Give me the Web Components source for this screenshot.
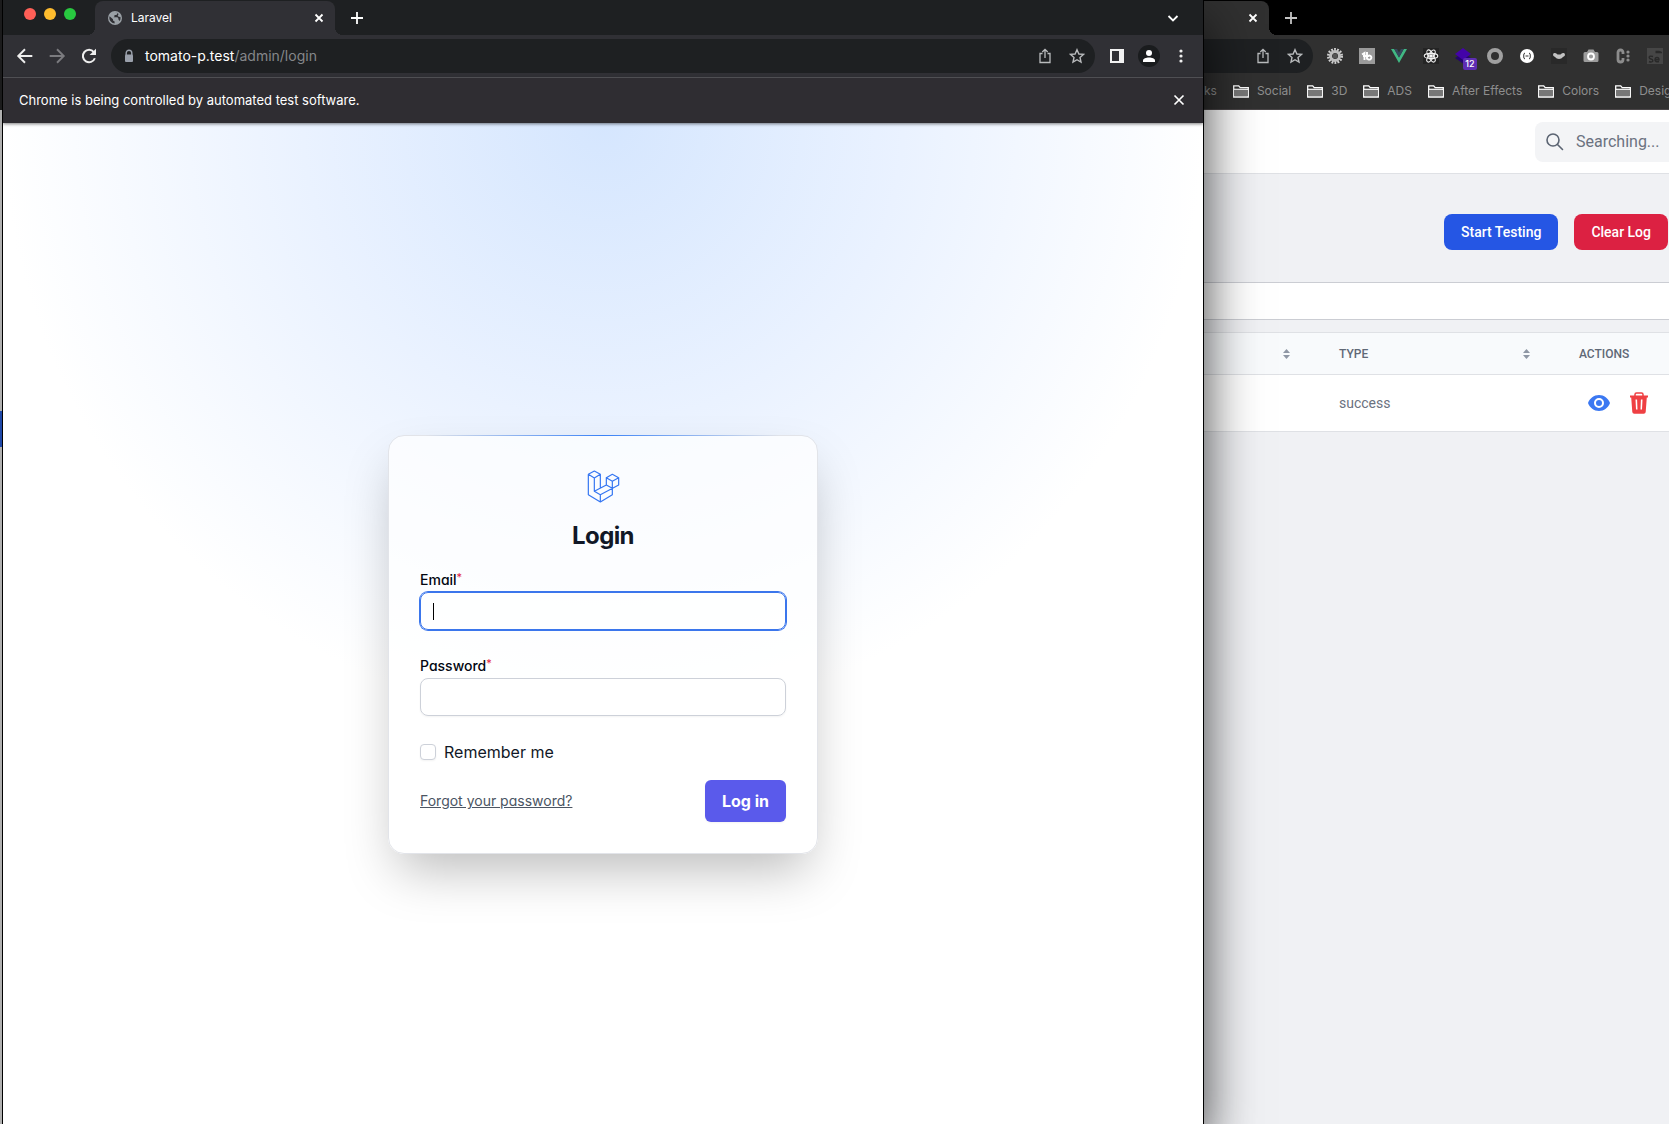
<!DOCTYPE html>
<html lang="en">
<head>
<meta charset="utf-8">
<title>Laravel</title>
<style>
  html, body { margin: 0; height: 100%; }
  body { overflow: hidden; font-family: Inter, "Liberation Sans", sans-serif; }
</style>
</head>
<body>
<desktop-view></desktop-view>

<template id="t-desktop">
  <style>
    :host { display: flex; height: 100vh; overflow: hidden; background: #000; }
    .edge { flex: 0 0 2px; z-index: 2; display: flex; flex-direction: column; background: #b0b0b0; }
    .edge i { display: block; }
    .edge .dark { height: 110px; background: #1b1b1c; }
    .edge .gap { height: 301px; }
    .edge .item { height: 36px; background: #1f48a8; }
    front-window { flex: 1 1 0; min-width: 0; z-index: 1; }
    back-window { flex: 0 0 465px; min-width: 0; }
  </style>
  <div class="edge"><i class="dark"></i><i class="gap"></i><i class="item"></i></div>
  <front-window></front-window>
  <back-window></back-window>
</template>

<template id="t-front">
  <style>
    :host { display: flex; flex-direction: column; box-sizing: border-box; border: 0 solid #000; border-width: 0 1px; box-shadow: 0 24px 50px rgba(0,0,0,.75); background: #fff; position: relative; }
    button { all: unset; display: flex; align-items: center; justify-content: center; }
    svg { display: block; }
    .strip { height: 35px; background: #1e2022; display: flex; box-sizing: border-box; }
    .lights { display: flex; gap: 8px; padding: 8px 19px 0 21px; }
    .lights i { width: 12px; height: 12px; border-radius: 50%; background: var(--c); }
    .tab { position: relative; margin-top: 1px; width: 240px; box-sizing: border-box; padding: 0 8px 0 13px; display: flex; align-items: center; gap: 9px; border-radius: 8px 8px 0 0; background: #303035; color: #fff; font-size: 12px; line-height: 16px; }
    .tab::before, .tab::after { content: ""; position: absolute; bottom: 0; width: 8px; height: 8px; }
    .tab::before { left: -8px; background: radial-gradient(circle at 0 0, transparent 8px, #303035 8px); }
    .tab::after { right: -8px; background: radial-gradient(circle at 100% 0, transparent 8px, #303035 8px); }
    .tab span { flex: 1; }
    .plus { width: 44px; color: #fff; }
    .chev { margin-left: auto; width: 60px; color: #fff; }
    .bar { height: 42px; background: #303035; border-bottom: 1px solid #57575b; display: flex; align-items: center; color: #eee; }
    .nav { display: flex; padding-left: 6px; padding-right: 6px; }
    .nav button, .tools button { width: 32px; height: 32px; }
    .dim { color: #7b7b7f; }
    .omni { flex: 1; height: 34px; border-radius: 17px; background: #1e2022; display: flex; align-items: center; padding: 0 2px 0 12px; gap: 10px; color: #b9bbbd; }
    .url { flex: 1; font-size: 14px; line-height: 20px; color: #85878a; }
    .url b { font-weight: 400; color: #fff; }
    .omni button { width: 32px; height: 32px; }
    .omni .share { margin-right: -10px; }
    .tools { display: flex; padding: 0 6px; }
    .avatar { width: 22px; height: 22px; border-radius: 50%; background: #1a1c1e; display: flex; align-items: center; justify-content: center; }
    .info { height: 45px; box-sizing: border-box; padding: 0 15px 2px 16px; background: #2f2d32; color: #fff; display: flex; align-items: center; justify-content: space-between; font-size: 13px; line-height: 20px; box-shadow: 0 1px 3px rgba(0,0,0,.5); z-index: 1; }
    login-page { flex: 1; min-height: 0; }
  </style>
  <div class="strip">
    <div class="lights"><i style="--c:#ff5f57"></i><i style="--c:#febc2e"></i><i style="--c:#28c840"></i></div>
    <div class="tab">
      <svg width="14" height="14" viewBox="0 0 14 14"><circle cx="7" cy="7" r="7" fill="#9aa0a6"/><path d="M1.600 5.200 5 8.200v1.200l1.600 1v2a5.500 5.500 0 0 1-5-7.200ZM7 1.500c1 0 1.800.2 2.500.6L8.500 4H6.500v1.500L5.500 6.200h4l1 1.500v1l1.200 1.300A5.500 5.500 0 0 0 12.400 6l-1.900-.3-.8-1.500 1-1.200A5.500 5.500 0 0 0 7 1.500Z" fill="#303035"/></svg>
      <span>Laravel</span>
      <button aria-label="Close tab"><ui-icon name="close" size="16"></ui-icon></button>
    </div>
    <button class="plus" aria-label="New tab"><ui-icon name="plus" size="16"></ui-icon></button>
    <button class="chev" aria-label="Search tabs"><ui-icon name="chevron" size="16"></ui-icon></button>
  </div>
  <div class="bar">
    <div class="nav">
      <button aria-label="Back"><ui-icon name="back" size="18"></ui-icon></button>
      <button class="dim" aria-label="Forward"><ui-icon name="forward" size="18"></ui-icon></button>
      <button aria-label="Reload"><ui-icon name="reload" size="18"></ui-icon></button>
    </div>
    <div class="omni">
      <svg width="12" height="14" viewBox="0 0 12 14"><path d="M3.200 6V4a2.800 2.800 0 0 1 5.600 0v2" fill="none" stroke="#9aa0ab" stroke-width="1.400"/><rect x="2" y="5.500" width="8" height="7.500" rx="1" fill="#9aa0ab"/></svg>
      <div class="url"><b>tomato-p.test</b>/admin/login</div>
      <button class="share" aria-label="Share"><ui-icon name="share" size="16"></ui-icon></button>
      <button aria-label="Bookmark"><ui-icon name="star" size="16"></ui-icon></button>
    </div>
    <div class="tools">
      <button aria-label="Side panel"><svg width="14" height="14" viewBox="0 0 14 14"><path fill="#f2f2f2" fill-rule="evenodd" d="M0 0h14v14H0ZM2 2v10h7V2Z"/></svg></button>
      <button aria-label="Profile"><span class="avatar"><svg width="14" height="14" viewBox="0 0 14 14" fill="#fff"><circle cx="7" cy="4" r="3"/><path d="M1 13v-1.500C1 9.500 4 8.500 7 8.500s6 1 6 3V13Z"/></svg></span></button>
      <button aria-label="Menu"><svg width="4" height="14" viewBox="0 0 4 14" fill="#eee"><circle cx="2" cy="2" r="1.600"/><circle cx="2" cy="7" r="1.600"/><circle cx="2" cy="12" r="1.600"/></svg></button>
    </div>
  </div>
  <div class="info"><span>Chrome is being controlled by automated test software.</span><button aria-label="Dismiss"><ui-icon name="closebig" size="18"></ui-icon></button></div>
  <login-page></login-page>
</template>

<template id="t-login">
  <style>
    :host { display: flex; align-items: center; justify-content: center; padding-top: 42px; background: radial-gradient(circle 600px at top, #d5e6fe 0, #eaf2ff 50%, #fff 100%) #fff; font-feature-settings: "cv11"; color: #111827; }
    form { position: relative; box-sizing: border-box; width: 100%; max-width: 430px; padding: 31px; border: 1px solid #e2e4e9; border-radius: 16px; background: rgba(255,255,255,.7); background-clip: padding-box; box-shadow: 0 25px 52px -10px rgba(0,0,0,.27); display: flex; flex-direction: column; }
    .line { position: absolute; top: -1px; left: 16px; right: 16px; height: 1px; background: linear-gradient(90deg, transparent 5%, #3b82f6, transparent 95%); }
    svg { display: block; margin: 3px auto 0; }
    h1 { margin: 15px 0 0; text-align: center; font-size: 24px; line-height: 36px; font-weight: 700; letter-spacing: -0.025em; }
    login-field { margin-top: 26px; }
    h1 + login-field { margin-top: 16px; }
    .remember { display: flex; align-items: center; gap: 8px; margin-top: 24px; font-size: 16px; line-height: 24px; }
    .remember input { appearance: none; box-sizing: border-box; margin: 0; width: 16px; height: 16px; border: 1px solid #cdd1d9; border-radius: 4px; background: #fff; box-shadow: 0 1px 2px rgba(0,0,0,.05); }
    .foot { display: flex; align-items: center; justify-content: space-between; margin-top: 16px; }
    a { color: #4b5563; font-size: 14px; line-height: 20px; text-decoration: underline; }
    button { border: 0; margin: 0; padding: 0 17px; height: 42px; border-radius: 6px; background: #5a5aeb; color: #fff; font: 700 16px/24px Inter, sans-serif; box-shadow: 0 1px 2px rgba(0,0,0,.05); }
  </style>
  <form onsubmit="return false">
    <div class="line"></div>
    <svg width="33" height="33" viewBox="624 148 99 99" fill="none" stroke="#3576f2" stroke-width="3.600" stroke-linejoin="round"><path d="M646 151 664 161 646 172 628 161ZM628 161V222L664 244 700 222V182L682 171V193L646 212V172M664 161V203M682 171 700 161 719 171 700 182M719 171V193L664 222V244M646 212 664 222M682 193 700 203"/></svg>
    <h1>Login</h1>
    <login-field field="email" type="email" text="Email" active></login-field>
    <login-field field="password" type="password" text="Password"></login-field>
    <label class="remember"><input type="checkbox"><span>Remember me</span></label>
    <div class="foot"><a href="#forgot">Forgot your password?</a><button type="submit">Log in</button></div>
  </form>
</template>

<template id="t-field">
  <style>
    :host { display: block; }
    label { display: flex; align-items: flex-start; font-size: 14px; line-height: 20px; font-weight: 500; color: #030712; height: 22px; }
    sup { font-size: 11px; line-height: 14px; font-weight: 400; color: #e11d48; }
    input { display: block; box-sizing: border-box; width: 100%; height: 38px; margin: 0; padding: 0 12px; border: 1px solid #cdd1d9; border-radius: 8px; background: rgba(255,255,255,.6); outline: 0; font: 16px Inter, sans-serif; box-shadow: 0 1px 2px rgba(0,0,0,.05); }
    :host([active]) input { border-color: #3b76ec; box-shadow: 0 0 0 1px #3b76ec; background: linear-gradient(#000,#000) 12px 50% / 1px 17px no-repeat, rgba(255,255,255,.6); caret-color: transparent; }
  </style>
  <label for="f"><span></span><sup>*</sup></label>
  <input id="f">
</template>

<template id="t-back">
  <style>
    :host { display: flex; flex-direction: column; overflow: hidden; background: #f0f1f4; font-family: Roboto, "Noto Sans", sans-serif; }
    button { all: unset; display: flex; align-items: center; justify-content: center; }
    .strip { height: 35px; background: #000; display: flex; flex: none; }
    .tab { position: relative; width: 65px; margin-top: 1px; box-sizing: border-box; padding-right: 8px; border-radius: 0 8px 0 0; background: #303030; color: #fff; display: flex; align-items: center; justify-content: flex-end; }
    .tab::after { content: ""; position: absolute; bottom: 0; right: -8px; width: 8px; height: 8px; background: radial-gradient(circle at 100% 0, transparent 8px, #303030 8px); }
    .plus { width: 44px; color: #c4c4c4; }
    .bar { flex: none; height: 42px; background: #303030; display: flex; align-items: center; color: #b9bbbd; }
    .omni { flex: none; width: 109px; height: 34px; border-radius: 0 17px 17px 0; background: #1e2022; display: flex; justify-content: flex-end; align-items: center; box-sizing: border-box; padding-right: 2px; margin-right: 6px; }
    .omni button, .ext { flex: none; width: 32px; height: 32px; display: flex; align-items: center; justify-content: center; }
    .ext { position: relative; }
    .badge { position: absolute; left: 16px; top: 18px; width: 14px; height: 12px; border-radius: 2px; background: #5e2db3; color: #fff; font: 500 9px/12px Inter, sans-serif; text-align: center; }
    .marks { flex: none; height: 33px; box-sizing: border-box; padding-bottom: 5px; border-bottom: 1px solid #4a4648; background: #303030; color: #8e8e8e; display: flex; align-items: center; gap: 16px; font: 12px/16px Inter, sans-serif; white-space: nowrap; overflow: hidden; }
    .marks span { display: flex; align-items: center; gap: 8px; }
    header { flex: none; height: 64px; box-sizing: border-box; background: #fff; border-bottom: 1px solid #dfe1e5; display: flex; align-items: center; padding-left: 331px; }
    .search { flex: 1; min-width: 0; height: 40px; border-radius: 8px 0 0 8px; background: #f3f4f6; display: flex; align-items: center; padding-left: 10px; gap: 11px; color: #5b6472; }
    .search input { flex: 1; min-width: 0; border: 0; padding: 0; background: none; outline: 0; font: 16px/24px Roboto, sans-serif; }
    .search input::placeholder { color: #6b7280; opacity: 1; }
    .actions { flex: none; height: 108px; display: flex; align-items: center; justify-content: flex-end; gap: 16px; padding: 8px 1px 0 0; box-sizing: border-box; }
    .actions button { height: 36px; padding: 0 17px; border-radius: 8px; background: #2556e4; color: #fff; font: 500 14px/20px Roboto, sans-serif; }
    .actions .red { background: #dc2142; }
    .panel { flex: none; height: 38px; box-sizing: border-box; border: 1px solid #cbcdd3; border-width: 1px 0; background: #fff; }
    table { margin-top: 12px; width: 100%; border-collapse: collapse; table-layout: fixed; }
    th, td { padding: 0 24px; border: 1px solid #dfe1e5; border-width: 1px 0; text-align: left; }
    th { height: 41px; background: #f8fafc; color: #5f6876; font-weight: 500; font-size: 12px; line-height: 16px; }
    th div { display: flex; justify-content: space-between; align-items: center; }
    th:nth-child(1) { width: 63px; } th:nth-child(2) { width: 192px; }
    td { height: 56px; background: #fff; color: #6b7280; font-size: 14px; line-height: 20px; }
    td:last-child { padding-left: 32px; padding-right: 0; }
    td div { display: flex; gap: 16px; align-items: center; }
    svg { display: block; }
  </style>
  <div class="strip"><div class="tab"><button aria-label="Close tab"><ui-icon name="close" size="16"></ui-icon></button></div><button class="plus" aria-label="New tab"><ui-icon name="plus" size="16"></ui-icon></button></div>
  <div class="bar">
    <div class="omni"><button aria-label="Share"><ui-icon name="share" size="16"></ui-icon></button><button aria-label="Bookmark"><ui-icon name="star" size="16"></ui-icon></button></div>
    <div class="ext"><svg width="16" height="16" viewBox="0 0 16 16"><circle cx="8" cy="8" r="6.500" fill="none" stroke="#d0d0d0" stroke-width="3" stroke-dasharray="1.700 1.200"/><circle cx="8" cy="8" r="4.500" fill="none" stroke="#bdbdbd" stroke-width="3"/><circle cx="8" cy="8" r="2.500" fill="#555"/></svg></div>
    <div class="ext"><svg width="16" height="16" viewBox="0 0 16 16"><path fill="#9a9a9a" d="M0 0h16v16H0Z"/><path d="M3 6.500 5.500 5v7M4 8h6M8 4v7.500M8 9.500a2.200 2 0 1 1 0 .2" fill="none" stroke="#fff" stroke-width="1.900"/></svg></div>
    <div class="ext"><svg width="16" height="16" viewBox="0 0 16 16"><path fill="#41b883" d="M0 1h3.200L8 9.500 12.800 1H16L8 15Z"/><path fill="#35495e" d="M3.200 1H6l2 3.500L10 1h2.800L8 9.500Z"/></svg></div>
    <div class="ext"><svg width="16" height="16" viewBox="0 0 16 16" fill="none" stroke="#f4f4f4" stroke-width="1.100"><path d="M0 0h16v16H0Z" fill="#242424" stroke="none"/><ellipse cx="8" cy="8" rx="6.800" ry="2.600"/><ellipse cx="8" cy="8" rx="6.800" ry="2.600" transform="rotate(60 8 8)"/><ellipse cx="8" cy="8" rx="6.800" ry="2.600" transform="rotate(120 8 8)"/><circle cx="8" cy="8" r="1.300" fill="#fff"/></svg></div>
    <div class="ext"><svg width="16" height="16" viewBox="0 0 16 16"><path d="m0 10 8-5 8 5-8 5.500Z" fill="#24046e"/><path d="m0 6 8-6 8 6-8 6Z" fill="#4303a8"/></svg><span class="badge">12</span></div>
    <div class="ext"><svg width="16" height="16" viewBox="0 0 16 16"><circle cx="8" cy="8" r="6" fill="none" stroke="#a0a0a0" stroke-width="4"/></svg></div>
    <div class="ext"><svg width="14" height="14" viewBox="0 0 14 14"><circle cx="7" cy="7" r="7" fill="#fff"/><path d="M5 4Q3.500 4 3.700 7 3.500 10 5 10M9 4Q10.500 4 10.300 7 10.500 10 9 10M5.500 7h3" fill="none" stroke="#333" stroke-width="1"/></svg></div>
    <div class="ext"><svg width="16" height="16" viewBox="0 0 16 16"><path fill="#292929" d="M0 0h16v16H0Z"/><path d="M2 7q0-2.500 2-2 1.500.2 2.500 1.500h3Q10.500 5 12 5q2-.5 2 2 0 1-2 2-1.500 2-4 2T4 9Q2 8 2 7" fill="#c2c2c2"/></svg></div>
    <div class="ext"><svg width="16" height="16" viewBox="0 0 16 16"><path d="M2 4h2l1.500-2.500h5L12 4h2a1.500 1.500 0 0 1 1.500 1.500v7A1.500 1.500 0 0 1 14 14H2a1.500 1.500 0 0 1-1.500-1.500v-7A1.500 1.500 0 0 1 2 4Z" fill="#9c9c9c"/><circle cx="8" cy="8.500" r="3" fill="#9c9c9c" stroke="#fff" stroke-width="1.800"/></svg></div>
    <div class="ext"><svg width="16" height="16" viewBox="0 0 16 16"><path d="M8 6V4.500Q8 2 5.500 2T3 4.500v7Q3 14 5.500 14T8 11.500V10" fill="none" stroke="#8c8c8c" stroke-width="2.800"/><g fill="#8c8c8c"><circle cx="13" cy="4" r="1.600"/><circle cx="13" cy="8" r="1.600"/><circle cx="13" cy="12" r="1.600"/></g></svg></div>
    <div class="ext"><svg width="16" height="16" viewBox="0 0 16 16" fill="none" stroke="#292929" stroke-width="1.400"><path d="M0 0h16v16H0Z" fill="#464646" stroke="none"/><path d="M6 8.500Q2 7.500 2.200 9.500 2.500 11 4.500 11.200 6.500 12 5.500 13.500 4 14.500 2 13.500M8 11.800h4Q12 9.500 10 9.500T8 12q.5 2.500 4 1.500M8.500 3.500h4M13 3v2M8.500 4.500H15"/></svg></div>
  </div>
  <div class="marks"></div>
  <header><label class="search"><svg width="20" height="20" viewBox="0 0 20 20" fill="none" stroke="currentColor" stroke-width="1.600" stroke-linecap="round"><circle cx="8" cy="8" r="6"/><path d="m12.500 12.500 5 5"/></svg><input type="text" placeholder="Searching..." aria-label="Search"></label></header>
  <div class="actions"><button>Start Testing</button><button class="red">Clear Log</button></div>
  <div class="panel"></div>
  <table>
    <thead><tr><th><div><span></span><sort-mark></sort-mark></div></th><th><div>TYPE<sort-mark></sort-mark></div></th><th>ACTIONS</th></tr></thead>
    <tbody><tr><td></td><td>success</td><td><div>
      <button aria-label="View"><svg width="24" height="24" viewBox="0 0 24 24"><path fill="#3b78f2" fill-rule="evenodd" d="M12 4C7 4 2.700 7.400 1 12c1.700 4.600 6 8 11 8s9.300-3.400 11-8c-1.700-4.600-6-8-11-8Zm0 13a5 5 0 1 1 0-10 5 5 0 0 1 0 10Zm0-2a3 3 0 1 0 0-6 3 3 0 0 0 0 6Z"/></svg></button>
      <button aria-label="Delete"><svg width="24" height="24" viewBox="0 0 24 24"><path d="M8 5V3.500Q8 2 9.500 2h5Q16 2 16 3.500V5" fill="none" stroke="#ef4043" stroke-width="1.500"/><path fill="#ef4043" fill-rule="evenodd" d="M3 4.500h18v2h-1.200L18.700 21a2 2 0 0 1-2 1.800H7.300a2 2 0 0 1-2-1.800L4.200 6.500H3ZM8.500 8.500l.5 10h1.500l-.4-10Zm5.400 0-.4 10H15l.5-10Z"/></svg></button>
    </div></td></tr></tbody>
  </table>
</template>

<script>
  const icons = {
    close: '<path d="m4.500 4.500 7 7m0-7-7 7" stroke-width="1.800"/>',
    closebig: '<path d="m4 4 8 8m0-8-8 8" stroke-width="1.500"/>',
    plus: '<path d="M8 2v12M2 8h12" stroke-width="1.800"/>',
    chevron: '<path d="m3.500 6 4.500 4.500L12.500 6" stroke-width="1.800"/>',
    back: '<path d="M14.500 8H2.500M8 2 2 8l6 6" stroke-width="1.700"/>',
    forward: '<path d="M1.500 8h12M8 2l6 6-6 6" stroke-width="1.700"/>',
    reload: '<path d="M13.200 10A5.500 5.500 0 1 1 12.300 4.500L13 5.400" stroke-width="1.800"/><path d="M14.200 1.500v5.700H8.500Z" fill="currentColor" stroke="none"/>',
    share: '<path d="M5.500 5.500H3V14.500h10V5.500h-2.500M8 10V1.500M5.300 4 8 1.300 10.700 4" stroke-width="1.300"/>',
    star: '<path d="m8 1.700 1.900 4.300 4.600.4-3.500 3.100 1 4.600L8 11.700l-4 2.400 1-4.600L1.500 6.400 6.100 6Z" stroke-width="1.400"/>',
    folder: '<path d="M.7 14V2.800h5l1.500 1.800h8.100V14Z" fill="none" stroke="#fff" stroke-width="1.300"/><path d="M2 7h12v6H2Z" fill="#777" stroke="none"/><path d="M1 6.300h14" stroke="#fff" stroke-width="1.200"/>'
  };

  class BaseElement extends HTMLElement {
    constructor() {
      super();
      this.attachShadow({ mode: 'open' });
      const id = this.constructor.template;
      if (id) this.shadowRoot.append(document.getElementById(id).content.cloneNode(true));
    }
  }

  customElements.define('ui-icon', class extends BaseElement {
    connectedCallback() {
      const s = this.getAttribute('size');
      this.shadowRoot.innerHTML = `<style>:host{display:block}svg{display:block}</style><svg width="${s}" height="${s}" viewBox="0 0 16 16" fill="none" stroke="currentColor">${icons[this.getAttribute('name')]}</svg>`;
    }
  });

  customElements.define('sort-mark', class extends BaseElement {
    connectedCallback() {
      this.shadowRoot.innerHTML = '<style>:host,svg{display:block}</style><svg width="9" height="10" viewBox="0 0 9 10" fill="#8f97a5"><path d="M4.500 0 8 4H1ZM4.500 10 1 6h7Z"/></svg>';
    }
  });

  customElements.define('login-field', class extends BaseElement {
    static template = 't-field';
    connectedCallback() {
      this.shadowRoot.querySelector('span').textContent = this.getAttribute('text');
      const input = this.shadowRoot.querySelector('input');
      input.type = this.getAttribute('type');
      input.name = this.getAttribute('field');
    }
  });

  customElements.define('login-page', class extends BaseElement { static template = 't-login'; });
  customElements.define('front-window', class extends BaseElement { static template = 't-front'; });

  customElements.define('back-window', class extends BaseElement {
    static template = 't-back';
    connectedCallback() {
      this.shadowRoot.querySelector('.marks').innerHTML = '<span>ks</span>' +
        ['Social', '3D', 'ADS', 'After Effects', 'Colors', 'Desig'].map(n => `<span><ui-icon name="folder" size="16"></ui-icon>${n}</span>`).join('');
    }
  });

  customElements.define('desktop-view', class extends BaseElement { static template = 't-desktop'; });
</script>
</body>
</html>
